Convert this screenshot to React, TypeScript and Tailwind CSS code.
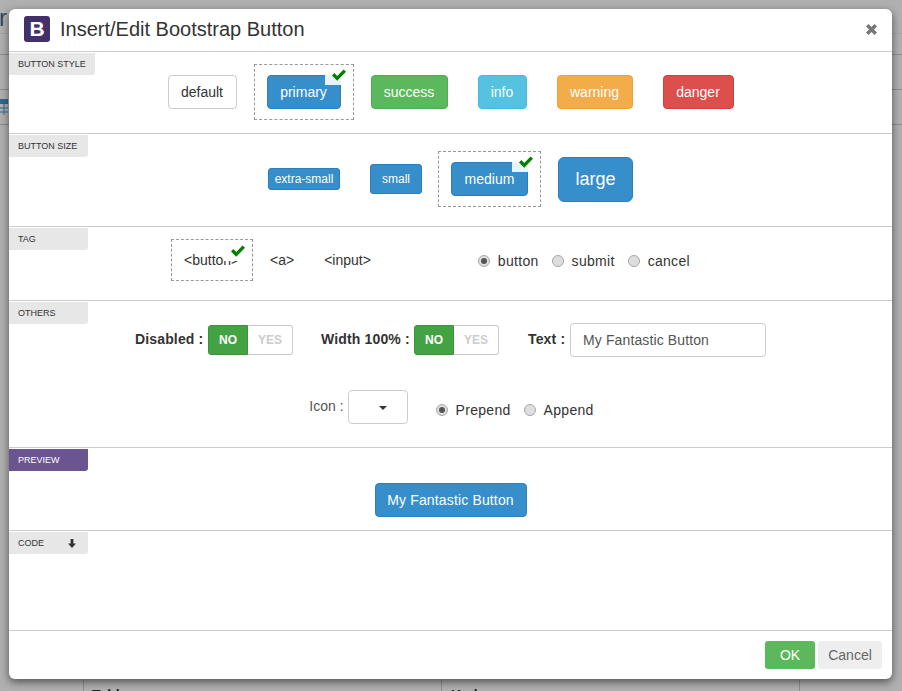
import type { ReactNode } from 'react';

const sans = "font-['Liberation_Sans',Arial,sans-serif]";

function CheckMark({ className }: { className: string }) {
  return (
    <svg className={className} viewBox="0 0 14 12" fill="#008000">
      <polygon points="0,6.5 2.4,4.1 5.2,6.9 11.6,0.4 14,2.8 5.2,11.8" />
    </svg>
  );
}

// dashed box + tick in the corner of the active choice
function Selected({ children, box, corner }: { children: ReactNode; box: string; corner: string }) {
  return (
    <div className={`border border-dashed border-[#999] ${box}`}>
      <div className="relative">
        {children}
        <span className={`absolute right-0 top-0 h-[10px] w-4 ${corner}`} />
        <CheckMark className="absolute right-[-5px] top-[-6px] h-3 w-[14px]" />
      </div>
    </div>
  );
}

function SectionTab({ label, wide, purple, children }: { label: string; wide?: boolean; purple?: boolean; children?: ReactNode }) {
  return (
    <div
      className={`absolute left-0 top-px flex h-[22px] items-center justify-between whitespace-nowrap rounded-br-[3px] pl-[9px] pr-[10px] pt-px text-[9px] ${
        wide ? 'w-[86px]' : 'w-[79px]'
      } ${purple ? 'bg-[#6b5590] text-white' : 'bg-[#e7e7e7] text-[#333]'}`}
    >
      <span>{label}</span>
      {children}
    </div>
  );
}

function Btn({ label, color, className = 'h-[34px] text-sm rounded-[4px]' }: { label: string; color: string; className?: string }) {
  return <button className={`block border ${className} ${color}`}>{label}</button>;
}

function Radio({ checked, label }: { checked?: boolean; label: string }) {
  return (
    <div className="flex items-center gap-2 text-sm text-[#333]">
      <span className="flex h-3 w-3 items-center justify-center rounded-full border border-[#a8a8a8] bg-[#dedede]">
        {checked && <span className="h-[6px] w-[6px] rounded-full bg-[#555]" />}
      </span>
      <span className="leading-5 tracking-[0.3px]">{label}</span>
    </div>
  );
}

function Toggle() {
  return (
    <div className="flex h-[30px] w-[85px] text-xs font-bold">
      <span className="flex w-10 items-center justify-center rounded-l-[3px] border border-[#3d933d] bg-[#43a343] text-white">NO</span>
      <span className="flex flex-1 items-center justify-center rounded-r-[3px] border border-l-0 border-[#ccc] bg-white text-[#ccc]">YES</span>
    </div>
  );
}

const primary = 'bg-[#368ecb] border-[#2d7fb9] text-white';

export default function App() {
  return (
    <div className={`relative h-[691px] w-[902px] overflow-hidden bg-[#b0b0b0] ${sans}`}>
      {/* page behind the modal, dimmed */}
      <div className="flex h-full flex-col">
        <div className="h-[34px] border-b border-[#a4a4a4] pt-[4px] text-[24px] leading-7 text-[#2f4d60]">
          <span className="ml-[-1px]">r</span>
        </div>
        <div className="h-[21px] border-b border-[#8c8c8c]" />
        <div className="h-[35px] border-b border-[#8c8c8c]" />
        <div className="h-[35px] border-b border-[#8c8c8c] pt-[9px]">
          <svg className="block h-4 w-2" viewBox="0 0 8 16">
            <rect width="8" height="5" fill="#2c6a94" />
            <path d="M0 9h8M0 13h8M4 5v11" stroke="#2c6a94" strokeWidth="1" />
          </svg>
        </div>
        <div className="flex-1" />
        <div className="ml-[83px] grid h-[11px] w-[717px] grid-cols-[357px_1fr] border-x border-[#8f8f8f] text-sm font-bold leading-5 text-[#222]">
          <div className="pl-2 pt-[5px]">Tabl</div>
          <div className="border-l border-[#8f8f8f] pl-[9px] pt-[5px]">Ked</div>
        </div>
      </div>

      {/* modal */}
      <div className="absolute inset-0 p-[9px] pr-[10px] pb-3">
        <div className="h-[670px] rounded-md bg-white shadow-[0_3px_9px_rgba(0,0,0,0.55)]">
          <header className="flex h-[43px] items-center border-b border-[#ccc] pb-[2px] pl-[15px] pr-[15px]">
            <span className="flex h-[26px] w-[26px] items-center justify-center rounded-[3px] bg-[#41306a] text-[21px] font-bold text-white">B</span>
            <h1 className="ml-[10px] text-[20px] text-[#333]">Insert/Edit Bootstrap Button</h1>
            <svg className="ml-auto h-[11px] w-[11px]" viewBox="0 0 11 11" fill="#777">
              <polygon points="0,2.4 2.4,0 5.5,3.1 8.6,0 11,2.4 7.9,5.5 11,8.6 8.6,11 5.5,7.9 2.4,11 0,8.6 3.1,5.5" />
            </svg>
          </header>

          <section className="relative h-[82px] border-b border-[#ccc] pt-[12px]">
            <SectionTab label="BUTTON STYLE" wide />
            <div className="flex items-center justify-center gap-[17px]">
              <Btn label="default" color="w-[69px] bg-white border-[#ccc] text-[#333]" />
              <Selected box="px-3 py-[10px]" corner="bg-[#e9f2f9]">
                <Btn label="primary" color={`w-[74px] ${primary}`} />
              </Selected>
              <Btn label="success" color="w-[77px] bg-[#5cb85c] border-[#4cae4c] text-white" />
              <Btn label="info" color="w-[49px] bg-[#54c2e0] border-[#46b8da] text-white ml-[13px]" />
              <Btn label="warning" color="w-[76px] bg-[#f3ac4a] border-[#eea236] text-white ml-[13px]" />
              <Btn label="danger" color="w-[71px] bg-[#dc4f4d] border-[#d43f3a] text-white ml-[13px]" />
            </div>
          </section>

          <section className="relative h-[93px] border-b border-[#ccc] pt-[17px]">
            <SectionTab label="BUTTON SIZE" />
            <div className="flex items-center justify-center">
              <Btn label="extra-small" color={primary} className="h-[22px] w-[72px] rounded-[3px] text-xs" />
              <Btn label="small" color={primary} className="ml-[30px] h-[30px] w-[52px] rounded-[3px] text-xs" />
              <Selected box="ml-4 px-3 py-[10px]" corner="bg-[#e9f2f9]">
                <Btn label="medium" color={`w-[77px] ${primary}`} />
              </Selected>
              <Btn label="large" color={primary} className="ml-[17px] h-[45px] w-[75px] rounded-[6px] text-lg" />
            </div>
          </section>

          <section className="relative h-[74px] border-b border-[#ccc] pl-[162px] pt-[12px]">
            <SectionTab label="TAG" />
            <div className="flex items-center text-sm text-[#333]">
              <Selected box="px-3 py-[11px]" corner="bg-white">
                <span className="block w-[56px] leading-[18px]">&lt;button&gt;</span>
              </Selected>
              <span className="ml-[17px]">&lt;a&gt;</span>
              <span className="ml-[30px]">&lt;input&gt;</span>
              <div className="ml-[107px] flex items-center gap-[13px] pt-px">
                <Radio checked label="button" />
                <Radio label="submit" />
                <Radio label="cancel" />
              </div>
            </div>
          </section>

          <section className="relative h-[147px] border-b border-[#ccc] pt-[22px]">
            <SectionTab label="OTHERS" />
            <div className="flex h-[34px] items-center justify-center text-sm text-[#333]">
              <b className="mr-[5px] w-[68px] whitespace-nowrap pb-[2px] tracking-[0.15px]">Disabled :</b>
              <Toggle />
              <b className="ml-7 mr-1 w-[89px] whitespace-nowrap pb-[2px] tracking-[0.15px]">Width 100% :</b>
              <Toggle />
              <b className="ml-[29px] mr-1 w-[38px] whitespace-nowrap pb-[2px] tracking-[0.15px]">Text :</b>
              <input
                readOnly
                value="My Fantastic Button"
                className="h-[34px] w-[196px] rounded-[4px] border border-[#ccc] px-3 text-sm tracking-[0.12px] text-[#555] outline-none"
              />
            </div>
            <div className="mt-[33px] flex h-[34px] items-center justify-center pl-[2px] text-sm text-[#555]">
              <span className="mr-1 pb-[2px]">Icon :</span>
              <div className="flex h-[34px] w-[60px] items-center justify-center rounded-[4px] border border-[#ccc] bg-white pl-[10px]">
                <svg className="mt-[2px] h-1 w-2" viewBox="0 0 8 4" fill="#333">
                  <polygon points="0,0 8,0 4,4" />
                </svg>
              </div>
              <div className="ml-7 flex items-center gap-[13px] pt-[6px]">
                <Radio checked label="Prepend" />
                <Radio label="Append" />
              </div>
            </div>
          </section>

          <section className="relative h-[83px] border-b border-[#ccc] pt-[35px]">
            <SectionTab label="PREVIEW" purple />
            <div className="flex justify-center">
              <Btn label="My Fantastic Button" color={`w-[152px] tracking-[0.15px] ${primary}`} />
            </div>
          </section>

          <section className="relative h-[100px] border-b border-[#ccc]">
            <SectionTab label="CODE">
              <svg className="mr-[2px] h-[9px] w-2" viewBox="0 0 8 9" fill="#333">
                <polygon points="2.6,0 5.4,0 5.4,4.5 8,4.5 4,9 0,4.5 2.6,4.5" />
              </svg>
            </SectionTab>
          </section>

          <footer className="flex h-[48px] items-start justify-end gap-[3px] pr-[10px] pt-[10px] text-sm">
            <button className="h-7 w-[50px] rounded-[3px] bg-[#5cb85c] text-white">OK</button>
            <button className="h-7 w-16 rounded-[3px] bg-[#eeeeee] text-[#666]">Cancel</button>
          </footer>
        </div>
      </div>
    </div>
  );
}
